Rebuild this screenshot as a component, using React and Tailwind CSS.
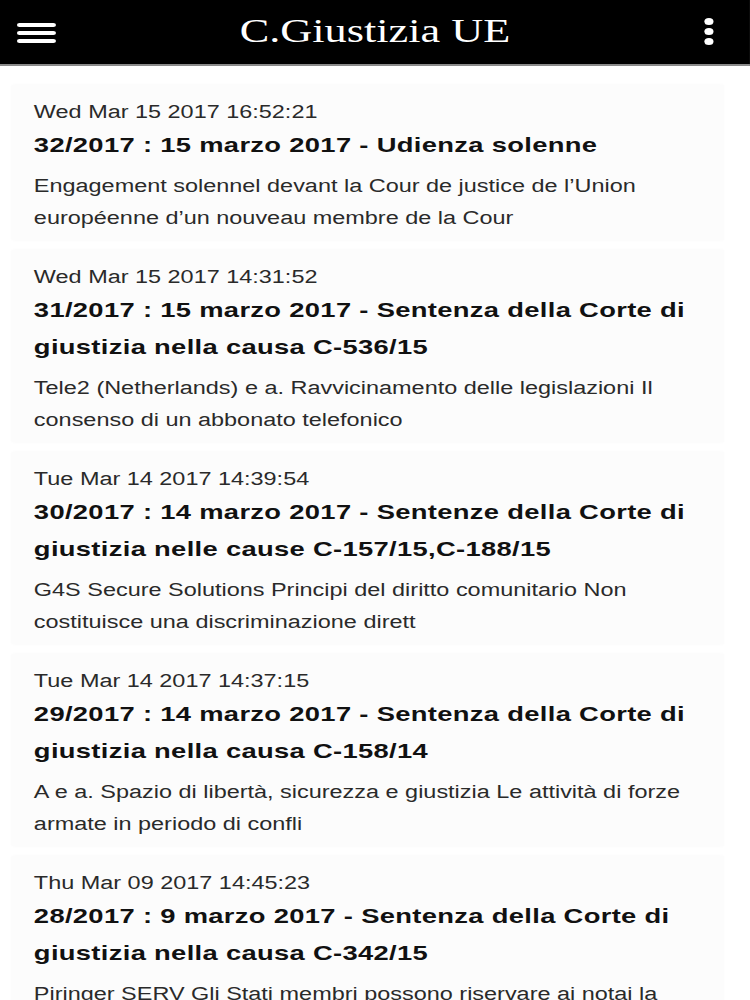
import React from "react";

const items = [
  {
    date: "Wed Mar 15 2017 16:52:21",
    title: "32/2017 : 15 marzo 2017 - Udienza solenne",
    desc: "Engagement solennel devant la Cour de justice de l\u2019Union europ\u00e9enne d\u2019un nouveau membre de la Cour",
  },
  {
    date: "Wed Mar 15 2017 14:31:52",
    title: "31/2017 : 15 marzo 2017 - Sentenza della Corte di giustizia nella causa C-536/15",
    desc: "Tele2 (Netherlands) e a. Ravvicinamento delle legislazioni Il consenso di un abbonato telefonico",
  },
  {
    date: "Tue Mar 14 2017 14:39:54",
    title: "30/2017 : 14 marzo 2017 - Sentenze della Corte di giustizia nelle cause C-157/15,C-188/15",
    desc: "G4S Secure Solutions Principi del diritto comunitario Non costituisce una discriminazione dirett",
  },
  {
    date: "Tue Mar 14 2017 14:37:15",
    title: "29/2017 : 14 marzo 2017 - Sentenza della Corte di giustizia nella causa C-158/14",
    desc: "A e a. Spazio di libert\u00e0, sicurezza e giustizia Le attivit\u00e0 di forze armate in periodo di confli",
  },
  {
    date: "Thu Mar 09 2017 14:45:23",
    title: "28/2017 : 9 marzo 2017 - Sentenza della Corte di giustizia nella causa C-342/15",
    desc: "Piringer SERV Gli Stati membri possono riservare ai notai la verifica dell\u2019autenticit\u00e0 della firma",
  },
];

export default function App() {
  return (
    <div className="w-[750px] h-[1000px] overflow-hidden bg-white">
      <div className="w-[576px] origin-top-left scale-x-[1.302] font-['Liberation_Sans',Arial,sans-serif]">
        <header className="h-[66px] bg-black border-b-2 border-[#8a8a8a] flex items-center">
          <div className="w-[80px] pl-[13px] flex flex-col gap-[4px] pt-[1px]">
            <span className="block w-[30px] h-[4px] rounded-full bg-white" />
            <span className="block w-[30px] h-[4px] rounded-full bg-white" />
            <span className="block w-[30px] h-[4px] rounded-full bg-white" />
          </div>
          <h1 className="flex-1 text-center text-white text-[34px] leading-none font-['Liberation_Serif','Times_New_Roman',serif] pb-[2px]">
            C.Giustizia UE
          </h1>
          <div className="w-[80px] pr-[28px] flex flex-col items-end gap-[3px] pb-[1px]">
            <span className="block w-[7px] h-[7px] rounded-full bg-white" />
            <span className="block w-[7px] h-[7px] rounded-full bg-white" />
            <span className="block w-[7px] h-[7px] rounded-full bg-white" />
          </div>
        </header>
        <main className="pt-[19px] flex flex-col gap-[10px]">
          {items.map((it, i) => (
            <article
              key={i}
              className="ml-[9px] mr-[20px] pl-[17px] pr-[8px] pt-[15px] pb-[6px] bg-[#fcfcfc] shadow-[0_0_3px_rgba(0,0,0,0.03)]"
            >
              <div className="text-[18px] leading-[24px] text-[#2a2a2a]">{it.date}</div>
              <h2 className="mt-[2px] text-[21px] leading-[37px] font-bold tracking-[0.25px] text-[#111]">{it.title}</h2>
              <p className="mt-[7px] text-[18px] leading-[32px] text-[#2a2a2a]">{it.desc}</p>
            </article>
          ))}
        </main>
      </div>
    </div>
  );
}
